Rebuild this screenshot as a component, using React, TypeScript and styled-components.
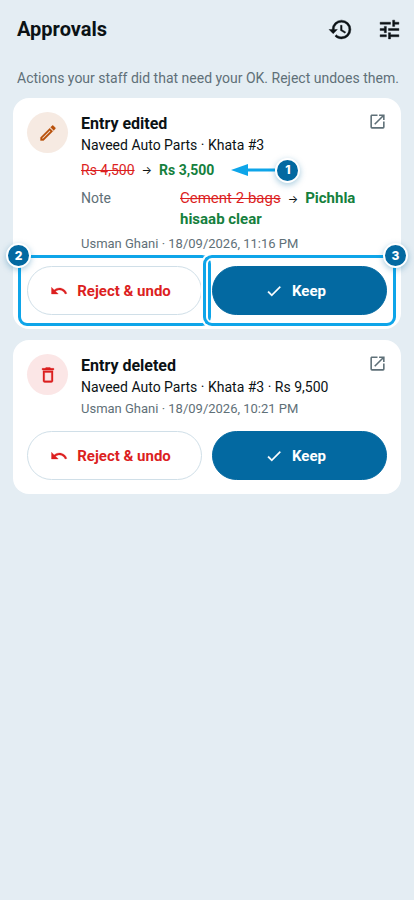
import React from "react";
import styled, { createGlobalStyle } from "styled-components";

const color = {
  page: "#e4edf3",
  card: "#ffffff",
  ink: "#0b1215",
  muted: "#5f7078",
  line: "#d0dfe8",
  primary: "#0369a1",
  accent: "#0ea5e9",
  danger: "#dc1f1f",
  success: "#15803d",
};

const GlobalStyle = createGlobalStyle`
  *, *::before, *::after { box-sizing: border-box; }
  body {
    margin: 0;
    background: ${color.page};
    color: ${color.ink};
    font-family: Roboto, "Liberation Sans", sans-serif;
    font-size: 14px;
    line-height: 20px;
  }
  h1, h2, p, dl, dd { margin: 0; }
  button { font: inherit; cursor: pointer; }
`;

const paths = {
  history:
    "M13.5,8H12V13L16.28,15.54L17,14.33L13.5,12.25V8M13,3A9,9 0 0,0 4,12H1L4.96,16.03L9,12H6A7,7 0 0,1 13,5A7,7 0 0,1 20,12A7,7 0 0,1 13,19C11.07,19 9.32,18.21 8.06,16.94L6.64,18.36C8.27,20 10.5,21 13,21A9,9 0 0,0 22,12A9,9 0 0,0 13,3",
  tune: "M3,17V19H9V17H3M3,5V7H13V5H3M13,21V19H21V17H13V15H11V21H13M7,9V11H3V13H7V15H9V9H7M21,13V11H11V13H21M15,9H17V7H21V5H17V3H15V9Z",
  open: "M14,3V5H17.59L7.76,14.83L9.17,16.24L19,6.41V10H21V3M19,19H5V5H12V3H5C3.89,3 3,3.9 3,5V19A2,2 0 0,0 5,21H19A2,2 0 0,0 21,19V12H19V19Z",
  pencil:
    "M14.06,9L15,9.94L5.92,19H5V18.08L14.06,9M17.66,3C17.41,3 17.15,3.1 16.96,3.29L15.13,5.12L18.88,8.87L20.71,7.04C21.1,6.65 21.1,6 20.71,5.63L18.37,3.29C18.17,3.09 17.92,3 17.66,3M14.06,6.19L3,17.25V21H6.75L17.81,9.94L14.06,6.19Z",
  trash:
    "M6,19A2,2 0 0,0 8,21H16A2,2 0 0,0 18,19V7H6V19M8,9H16V19H8V9M15.5,4L14.5,3H9.5L8.5,4H5V6H19V4H15.5Z",
  undo: "M12.5,8C9.85,8 7.45,9 5.6,10.6L2,7V16H11L7.38,12.38C8.77,11.22 10.54,10.5 12.5,10.5C16.04,10.5 19.05,12.81 20.1,16L22.47,15.22C21.08,11.03 17.15,8 12.5,8Z",
  check: "M21,7L9,19L3.5,13.5L4.91,12.09L9,16.17L19.59,5.59L21,7Z",
};

type IconProps = { name: keyof typeof paths; size: number; bold?: boolean };

function Icon({ name, size, bold }: IconProps) {
  return (
    <svg
      width={size}
      height={size}
      viewBox="0 0 24 24"
      fill="currentColor"
      stroke={bold ? "currentColor" : "none"}
      strokeWidth={0.4}
      aria-hidden="true"
    >
      <path d={paths[name]} />
    </svg>
  );
}

const Page = styled.main`
  display: flex;
  flex-direction: column;
`;

const TopBar = styled.header`
  display: flex;
  align-items: center;
  justify-content: space-between;
  height: 58px;
  padding: 0 12px 0 17px;
`;

const PageTitle = styled.h1`
  font-size: 20px;
  line-height: 28px;
  font-weight: 700;
`;

const Toolbar = styled.div`
  display: flex;
  gap: 24px;
`;

const IconButton = styled.button`
  display: flex;
  padding: 0;
  border: 0;
  background: none;
  color: inherit;
`;

const Hint = styled.p`
  padding: 10px 8px 10px 17px;
  color: ${color.muted};
`;

const List = styled.div`
  display: flex;
  flex-direction: column;
  gap: 11px;
  padding: 0 13px;
`;

const Card = styled.article`
  display: flex;
  flex-direction: column;
  gap: 12px;
  padding: 14px;
  border-radius: 16px;
  background: ${color.card};
`;

const CardTop = styled.div`
  display: grid;
  grid-template-columns: 41px 1fr;
  column-gap: 13px;
  align-items: start;
`;

const Avatar = styled.span<{ $tone: "edit" | "delete" }>`
  display: flex;
  align-items: center;
  justify-content: center;
  width: 41px;
  height: 41px;
  border-radius: 50%;
  color: ${(p) => (p.$tone === "edit" ? "#b8500a" : color.danger)};
  background: ${(p) => (p.$tone === "edit" ? "#f6eae2" : "#fbe6e6")};
`;

const Details = styled.div`
  display: flex;
  flex-direction: column;
`;

const TitleRow = styled.div`
  display: flex;
  align-items: flex-start;
  justify-content: space-between;
`;

const CardTitle = styled.h2`
  font-size: 16px;
  line-height: 23px;
  font-weight: 700;
`;

const OpenButton = styled(IconButton)`
  color: ${color.muted};
`;

const Subject = styled.p`
  line-height: 21px;
`;

const Meta = styled.p`
  color: ${color.muted};
  font-size: 13px;
  line-height: 21px;
`;

const AmountRow = styled.div`
  display: flex;
  align-items: center;
  padding: 4px 0;
`;

const NoteRow = styled.dl`
  display: grid;
  grid-template-columns: 99px 1fr;
  padding: 4px 20px 3px 0;
`;

const NoteLabel = styled.dt`
  color: ${color.muted};
`;

const NoteValue = styled.dd`
  font-size: 15px;
  line-height: 21px;
`;

const Before = styled.del`
  color: ${color.danger};
`;

const Arrow = styled.span`
  margin: 0 7px;
  font-family: Inter, sans-serif;
  font-size: 11px;
  line-height: 1;
`;

const After = styled.ins`
  color: ${color.success};
  font-weight: 700;
  text-decoration: none;
`;

const Actions = styled.div`
  display: grid;
  grid-template-columns: 1fr 1fr;
  gap: 10px;
`;

const Slot = styled.div`
  position: relative;
  display: grid;
`;

const ActionButton = styled.button<{ $kind: "outline" | "solid" }>`
  display: flex;
  align-items: center;
  justify-content: center;
  gap: 9px;
  height: 49px;
  padding: 0 16px 0 8px;
  border: 1px solid ${(p) => (p.$kind === "solid" ? color.primary : color.line)};
  border-radius: 25px;
  background: ${(p) => (p.$kind === "solid" ? color.primary : color.card)};
  color: ${(p) => (p.$kind === "solid" ? "#ffffff" : color.danger)};
  font-size: 15px;
  font-weight: 700;
`;

const Highlight = styled.span`
  position: absolute;
  inset: -11px -9px;
  border: 3px solid ${color.accent};
  border-radius: 9px;
  box-shadow: 0 0 0 2px #ffffff, inset 0 0 0 2px #ffffff;
  pointer-events: none;
`;

const Badge = styled.span`
  display: flex;
  align-items: center;
  justify-content: center;
  width: 25px;
  height: 25px;
  border: 2px solid #ffffff;
  border-radius: 50%;
  background: ${color.primary};
  color: #ffffff;
  box-shadow: 0 2px 6px rgba(3, 105, 161, 0.35);
  font-family: Inter, sans-serif;
  font-size: 12px;
  font-weight: 800;
`;

const CornerBadge = styled(Badge)<{ $side: "left" | "right" }>`
  position: absolute;
  z-index: 1;
  top: -23px;
  ${(p) => p.$side}: -21px;
`;

const Pointer = styled.span`
  display: flex;
  align-items: center;
  height: 20px;
  margin-left: 17px;
`;

type Step = number | undefined;

function ReviewActions({ rejectStep, keepStep }: { rejectStep?: Step; keepStep?: Step }) {
  return (
    <Actions>
      <Slot>
        <ActionButton type="button" $kind="outline">
          <Icon name="undo" size={18} bold />
          Reject &amp; undo
        </ActionButton>
        {rejectStep && (
          <>
            <Highlight />
            <CornerBadge $side="left">{rejectStep}</CornerBadge>
          </>
        )}
      </Slot>
      <Slot>
        <ActionButton type="button" $kind="solid">
          <Icon name="check" size={18} bold />
          Keep
        </ActionButton>
        {keepStep && (
          <>
            <Highlight />
            <CornerBadge $side="right">{keepStep}</CornerBadge>
          </>
        )}
      </Slot>
    </Actions>
  );
}

function CardHeading({ children }: { children: React.ReactNode }) {
  return (
    <TitleRow>
      <CardTitle>{children}</CardTitle>
      <OpenButton type="button" aria-label="Open entry">
        <Icon name="open" size={19} />
      </OpenButton>
    </TitleRow>
  );
}

export default function App() {
  return (
    <Page>
      <GlobalStyle />
      <TopBar>
        <PageTitle>Approvals</PageTitle>
        <Toolbar>
          <IconButton type="button" aria-label="History">
            <Icon name="history" size={25} bold />
          </IconButton>
          <IconButton type="button" aria-label="Filters">
            <Icon name="tune" size={25} bold />
          </IconButton>
        </Toolbar>
      </TopBar>
      <Hint>Actions your staff did that need your OK. Reject undoes them.</Hint>
      <List>
        <Card>
          <CardTop>
            <Avatar $tone="edit">
              <Icon name="pencil" size={20} bold />
            </Avatar>
            <Details>
              <CardHeading>Entry edited</CardHeading>
              <Subject>Naveed Auto Parts · Khata #3</Subject>
              <AmountRow>
                <Before>Rs 4,500</Before>
                <Arrow>→</Arrow>
                <After>Rs 3,500</After>
                <Pointer>
                  <svg width="44" height="14" viewBox="0 0 44 14" aria-hidden="true">
                    <path d="M14 7H44" stroke={color.accent} strokeWidth="3" />
                    <path d="M0 7L17 1V13Z" fill={color.accent} />
                  </svg>
                  <Badge>1</Badge>
                </Pointer>
              </AmountRow>
              <NoteRow>
                <NoteLabel>Note</NoteLabel>
                <NoteValue>
                  <Before>Cement 2 bags</Before>
                  <Arrow>→</Arrow>
                  <After>Pichhla hisaab clear</After>
                </NoteValue>
              </NoteRow>
              <Meta>Usman Ghani · 18/09/2026, 11:16 PM</Meta>
            </Details>
          </CardTop>
          <ReviewActions rejectStep={2} keepStep={3} />
        </Card>
        <Card>
          <CardTop>
            <Avatar $tone="delete">
              <Icon name="trash" size={20} bold />
            </Avatar>
            <Details>
              <CardHeading>Entry deleted</CardHeading>
              <Subject>Naveed Auto Parts · Khata #3 · Rs 9,500</Subject>
              <Meta>Usman Ghani · 18/09/2026, 10:21 PM</Meta>
            </Details>
          </CardTop>
          <ReviewActions />
        </Card>
      </List>
    </Page>
  );
}
